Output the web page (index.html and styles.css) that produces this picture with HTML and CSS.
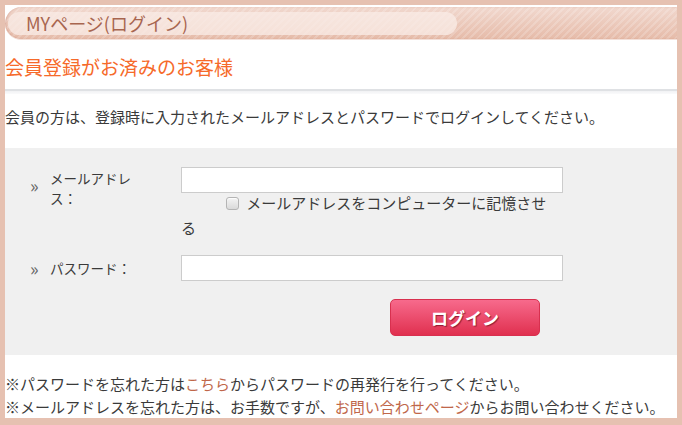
FILE: index.html
```html
<!DOCTYPE html>
<html lang="ja">
<head>
<meta charset="utf-8">
<title>MYページ(ログイン)</title>
<link rel="stylesheet" href="styles.css">
</head>
<body>
<div class="page">
  <div class="page-head"><h1 class="page-title">MYページ(ログイン)</h1></div>
  <h2 class="section-title">会員登録がお済みのお客様</h2>
  <div class="divider"></div>
  <p class="lead">会員の方は、登録時に入力されたメールアドレスとパスワードでログインしてください。</p>
  <form class="login-box">
    <div class="row">
      <div class="label"><span class="mark">&raquo;</span><span class="label-text">メールアドレス：</span></div>
      <div class="field">
        <input class="text-input" type="text">
        <p class="remember"><input class="check" type="checkbox"> メールアドレスをコンピューターに記憶させる</p>
      </div>
    </div>
    <div class="row row-pass">
      <div class="label"><span class="mark">&raquo;</span><span class="label-text">パスワード：</span></div>
      <div class="field">
        <input class="text-input" type="password">
      </div>
    </div>
    <div class="actions"><button class="login-btn" type="button">ログイン</button></div>
  </form>
  <div class="notes">
    <p>※パスワードを忘れた方は<a class="link" href="#">こちら</a>からパスワードの再発行を行ってください。</p>
    <p>※メールアドレスを忘れた方は、お手数ですが、<a class="link" href="#">お問い合わせページ</a>からお問い合わせください。</p>
  </div>
</div>
</body>
</html>
```
FILE: styles.css
```css
html, body {
  margin: 0;
  padding: 0;
}
body {
  background: #e6c1b1;
  font-family: "Noto Sans CJK JP", "Noto Sans", sans-serif;
  color: #3a3a3a;
  font-size: 15px;
}
.page {
  margin: 5px;
  width: 672px;
  height: 413px;
  background: #fff;
  overflow: hidden;
  padding-top: 2px;
  box-sizing: border-box;
}
.page-head {
  height: 33px;
  border-radius: 17px 0 0 17px;
  background:
    repeating-linear-gradient(135deg, rgba(255,255,255,0.18) 0 2px, rgba(255,255,255,0) 2px 5px),
    linear-gradient(#f1d8ce, #e6bba9);
  box-shadow: inset 1px 0 2px rgba(190,120,100,0.35);
  padding: 5px 0 0 3px;
  box-sizing: border-box;
  border-bottom: 1px solid #f3dfd8;
}
.page-title {
  margin: 0;
  width: 449px;
  height: 23px;
  border-radius: 12px;
  background: rgba(250,236,231,0.75);
  font-size: 18px;
  font-weight: normal;
  color: #a8654f;
  line-height: 23px;
  padding-left: 18px;
  box-sizing: border-box;
}
.section-title {
  margin: 15px 0 0;
  font-size: 19px;
  font-weight: normal;
  color: #f66a2a;
  line-height: 24px;
}
.divider {
  margin-top: 10px;
  height: 5px;
  background: linear-gradient(#dfe1e4 0, #dfe1e4 2px, #f1f2f4 2px, #fafafb 5px);
}
.lead {
  margin: 11px 0 0;
  line-height: 24px;
  font-size: 15px;
}
.login-box {
  margin-top: 19px;
  background: #f0f0f0;
  padding: 19px 0 19px 0;
  height: 207px;
  box-sizing: border-box;
}
.row {
  display: flex;
}
.label {
  width: 176px;
  display: flex;
  align-items: flex-start;
  padding-left: 25px;
  box-sizing: border-box;
  font-size: 13.5px;
  line-height: 20px;
  padding-top: 1px;
}
.mark {
  width: 20px;
  flex: none;
  color: #666;
  font-size: 18px;
  margin-top: 8px;
  line-height: 18px;
}
.label-text {
  width: 85px;
}
.field {
  width: 382px;
}
.text-input {
  display: block;
  width: 382px;
  height: 26px;
  margin: 0;
  border: 1px solid #cccccc;
  background: #fff;
  box-sizing: border-box;
  padding: 0 4px;
}
.remember {
  margin: -3px 0 0;
  width: 375px;
  text-indent: 45px;
  line-height: 25px;
  font-size: 15px;
}
.check {
  -webkit-appearance: none;
  appearance: none;
  width: 13px;
  height: 13px;
  margin: 0 4px 0 0;
  vertical-align: -1px;
  border: 1px solid #b4b4b4;
  border-radius: 3px;
  background: linear-gradient(#f4f4f4, #d9d9d9);
  box-shadow: inset 0 1px 1px rgba(255,255,255,0.8);
  box-sizing: border-box;
}
.row-pass {
  margin-top: 15px;
}
.row-pass .label {
  align-items: center;
  padding-top: 0;
}
.row-pass .mark {
  margin-top: 0;
}
.actions {
  padding-left: 385px;
  margin-top: 18px;
}
.login-btn {
  width: 150px;
  height: 37px;
  border: 1px solid #d8304f;
  border-radius: 5px;
  background: linear-gradient(#f76a8c, #e0304f);
  color: #fff;
  font-family: "Noto Sans CJK JP", sans-serif;
  font-weight: bold;
  font-size: 17px;
  text-shadow: 1px 1px 1px rgba(90,0,20,0.6);
  cursor: pointer;
  padding: 0;
}
.notes {
  margin-top: 17px;
}
.notes p {
  margin: 0;
  line-height: 23px;
  font-size: 15px;
}
.link {
  color: #c0674a;
  text-decoration: none;
}
```
